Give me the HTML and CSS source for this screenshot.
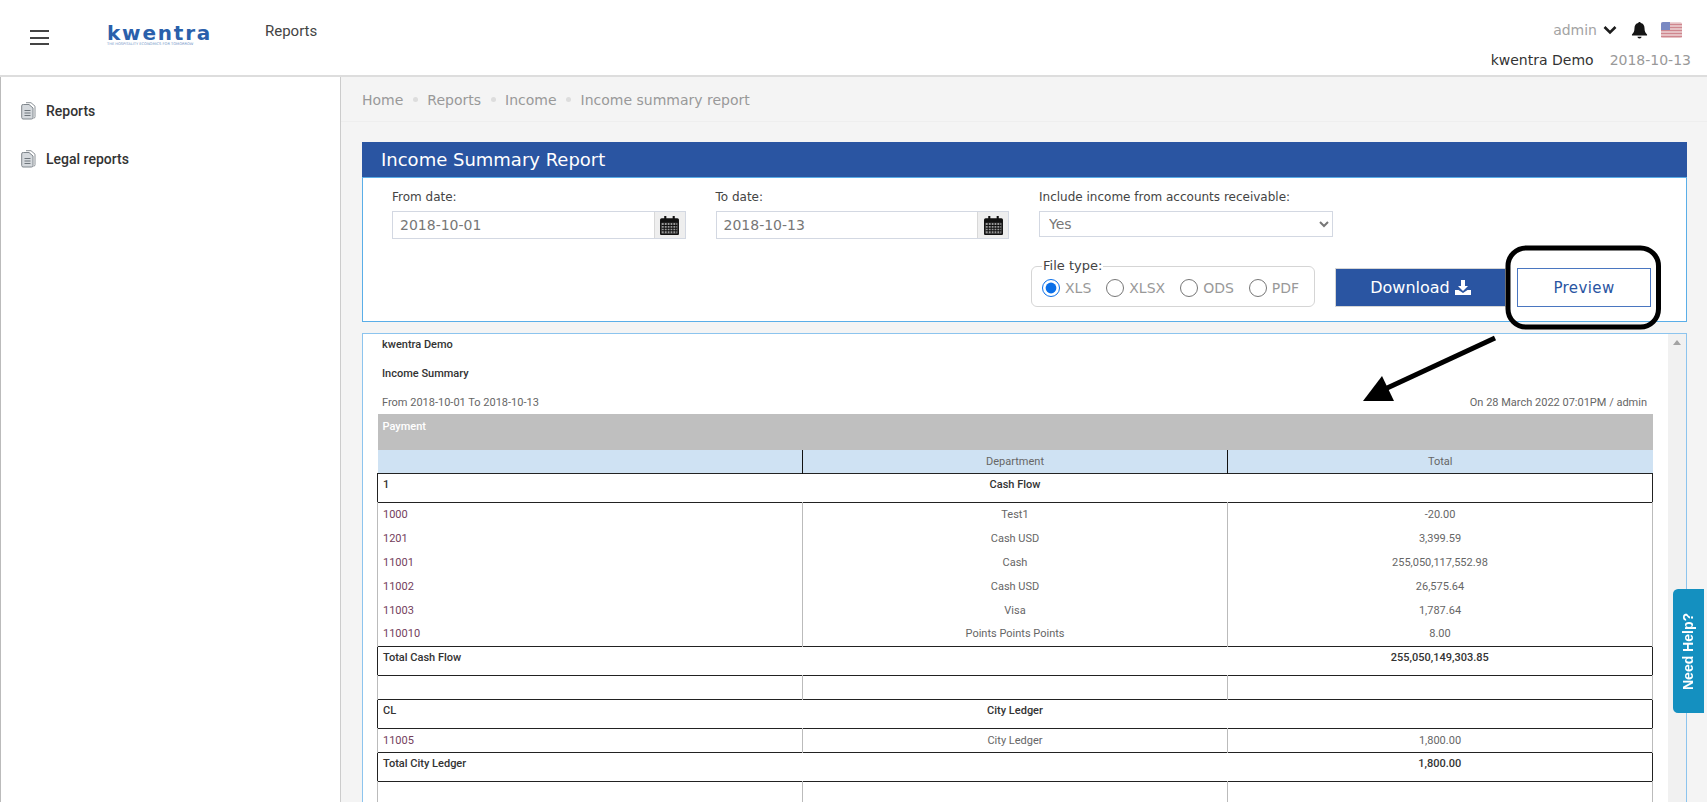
FILE: index.html
```html
<!DOCTYPE html>
<html lang="en">
<head>
    <meta charset="UTF-8">
    <meta name="viewport" content="width=device-width, initial-scale=1.0">
    <title>Income Summary Report - kwentra</title>
    <link rel="stylesheet" href="styles.css">
</head>
<body>

<header class="topbar">
    <div class="burger"><span></span><span></span><span></span></div>
    <div class="logo">
        <span class="logo-word">kwentra</span>
        <span class="logo-tag">THE HOSPITALITY ECONOMICS FOR TOMORROW</span>
    </div>
    <div class="topbar-title">Reports</div>
    <div class="topbar-right">
        <div class="user-row">
            <span class="user-name">admin</span>
            <svg class="chevron" viewBox="0 0 14 10" width="14" height="10"><path d="M1.5 2 7 7.5 12.5 2" fill="none" stroke="#1c1c1c" stroke-width="2.6"/></svg>
            <svg class="bell" viewBox="0 0 18 18" width="17" height="18"><path d="M9 0.5c.8 0 1.3.5 1.3 1.2 2.6.5 4 2.600 4 5.300 0 3.500 1 5.200 2.700 6.800v1H1v-1c1.700-1.600 2.700-3.300 2.700-6.800 0-2.700 1.400-4.800 4-5.300C7.700 1 8.200.5 9 .5z" fill="#151515"/><path d="M6.800 16.200h4.400a2.200 1.800 0 0 1-4.400 0z" fill="#151515"/></svg>
            <svg class="flag" viewBox="0 0 21 16" width="21" height="16">
                <rect width="21" height="16" rx="2" fill="#ecd3d5"/>
                <path d="M0 2.500h21M0 5.500h21M0 8.500h21M0 11.500h21M0 14.500h21" stroke="#cf868e" stroke-width="1.300"/>
                <path d="M2 0h7v8H0V2a2 2 0 0 1 2-2z" fill="#7a89c2"/>
            </svg>
        </div>
        <div class="hotel-row">
            <span class="hotel-name">kwentra Demo</span>
            <span class="hotel-date">2018-10-13</span>
        </div>
    </div>
</header>

<div class="page">
    <nav class="sidebar">
        <a class="side-item" href="#">
            <svg class="doc-icon" viewBox="0 0 15 18" width="15" height="18"><path d="M5 .7h5l4 3.500v10.500a1.500 1.500 0 0 1-1.500 1.500" fill="#fff" stroke="#8a9096" stroke-width="1"/><path d="M2.500 2.500h5.500l4 3.500v9.500a1.500 1.500 0 0 1-1.500 1.500h-8.500A1.500 1.500 0 0 1 .7 15.500V4a1.500 1.500 0 0 1 1.800-1.500z" fill="#d5d9dd" stroke="#7f868c" stroke-width="1"/><path d="M3.500 8.500h6M3.500 11h6M3.500 13.500h6" stroke="#6f767c" stroke-width="1"/></svg>
            <span>Reports</span>
        </a>
        <a class="side-item" href="#">
            <svg class="doc-icon" viewBox="0 0 15 18" width="15" height="18"><path d="M5 .7h5l4 3.500v10.500a1.500 1.500 0 0 1-1.500 1.500" fill="#fff" stroke="#8a9096" stroke-width="1"/><path d="M2.500 2.500h5.500l4 3.500v9.500a1.500 1.500 0 0 1-1.500 1.500h-8.500A1.500 1.500 0 0 1 .7 15.500V4a1.500 1.500 0 0 1 1.800-1.500z" fill="#d5d9dd" stroke="#7f868c" stroke-width="1"/><path d="M3.500 8.500h6M3.500 11h6M3.500 13.500h6" stroke="#6f767c" stroke-width="1"/></svg>
            <span>Legal reports</span>
        </a>
    </nav>

    <main class="content">
        <div class="breadcrumb">
            <span>Home</span><i></i><span>Reports</span><i></i><span>Income</span><i></i><span>Income summary report</span>
        </div>

        <section class="panel">
            <h1 class="panel-title">Income Summary Report</h1>
            <div class="panel-body">
                <div class="filter-row">
                    <div class="field">
                        <label for="from-date">From date:</label>
                        <div class="date-input">
                            <input type="text" id="from-date" value="2018-10-01">
                            <span class="date-btn">
                                <svg viewBox="0 0 18 19" width="19" height="20"><path d="M0 4.500a1.500 1.500 0 0 1 1.500-1.500H4V1h2v2h6V1h2v2h2.500A1.500 1.500 0 0 1 18 4.500V18a1 1 0 0 1-1 1H1a1 1 0 0 1-1-1z" fill="#111"/><path d="M1.500 7.500h15v10h-15z" fill="#999"/><path d="M1.500 10h15M1.500 12.500h15M1.500 15h15M4 7.500v10M6.800 7.500v10M9.500 7.500v10M12.200 7.500v10M15 7.500v10" stroke="#111" stroke-width="1"/></svg>
                            </span>
                        </div>
                    </div>
                    <div class="field">
                        <label for="to-date">To date:</label>
                        <div class="date-input">
                            <input type="text" id="to-date" value="2018-10-13">
                            <span class="date-btn">
                                <svg viewBox="0 0 18 19" width="19" height="20"><path d="M0 4.500a1.500 1.500 0 0 1 1.500-1.500H4V1h2v2h6V1h2v2h2.500A1.500 1.500 0 0 1 18 4.500V18a1 1 0 0 1-1 1H1a1 1 0 0 1-1-1z" fill="#111"/><path d="M1.500 7.500h15v10h-15z" fill="#999"/><path d="M1.500 10h15M1.500 12.500h15M1.500 15h15M4 7.500v10M6.800 7.500v10M9.500 7.500v10M12.200 7.500v10M15 7.500v10" stroke="#111" stroke-width="1"/></svg>
                            </span>
                        </div>
                    </div>
                    <div class="field">
                        <label for="receivable">Include income from accounts receivable:</label>
                        <select id="receivable" class="select-input">
                            <option>Yes</option>
                            <option>No</option>
                        </select>
                    </div>
                </div>

                <div class="action-row">
                    <fieldset class="file-type">
                        <legend>File type:</legend>
                        <label class="radio"><input type="radio" name="file-type" checked> XLS</label>
                        <label class="radio"><input type="radio" name="file-type"> XLSX</label>
                        <label class="radio"><input type="radio" name="file-type"> ODS</label>
                        <label class="radio"><input type="radio" name="file-type"> PDF</label>
                    </fieldset>
                    <button class="btn-download">Download
                        <svg viewBox="0 0 16 15" width="16" height="15"><path d="M6 0h4v6h3L8 11 3 6h3z" fill="#fff"/><path d="M0 10h3.500L8 13l4.500-3H16v5H0z" fill="#fff"/></svg>
                    </button>
                    <button class="btn-preview">Preview</button>
                </div>
            </div>
        </section>

        <section class="preview">
            <div class="report">
                <div class="report-line strong">kwentra Demo</div>
                <div class="report-line strong second">Income Summary</div>
                <div class="report-meta">
                    <span>From 2018-10-01 To 2018-10-13</span>
                    <span>On 28 March 2022 07:01PM / admin</span>
                </div>
                <table class="report-table">
                    <tr class="head-gray"><th>Payment</th><th></th><th></th></tr>
                    <tr class="head-blue"><td></td><td>Department</td><td>Total</td></tr>
                    <tr class="group"><td>1</td><td>Cash Flow</td><td></td></tr>
                    <tr class="line"><td><a>1000</a></td><td>Test1</td><td>-20.00</td></tr>
                    <tr class="line"><td><a>1201</a></td><td>Cash USD</td><td>3,399.59</td></tr>
                    <tr class="line"><td><a>11001</a></td><td>Cash</td><td>255,050,117,552.98</td></tr>
                    <tr class="line"><td><a>11002</a></td><td>Cash USD</td><td>26,575.64</td></tr>
                    <tr class="line"><td><a>11003</a></td><td>Visa</td><td>1,787.64</td></tr>
                    <tr class="line"><td><a>110010</a></td><td>Points Points Points</td><td>8.00</td></tr>
                    <tr class="group"><td>Total Cash Flow</td><td></td><td>255,050,149,303.85</td></tr>
                    <tr class="line"><td></td><td></td><td></td></tr>
                    <tr class="group"><td>CL</td><td>City Ledger</td><td></td></tr>
                    <tr class="line"><td><a>11005</a></td><td>City Ledger</td><td>1,800.00</td></tr>
                    <tr class="group"><td>Total City Ledger</td><td></td><td>1,800.00</td></tr>
                    <tr class="line"><td></td><td></td><td></td></tr>
                </table>
            </div>
            <div class="scrollbar"><span class="scroll-up"></span></div>
        </section>
    </main>
</div>

<a class="need-help" href="#">Need Help?</a>

<svg class="annotation" viewBox="0 0 1707 802" width="1707" height="802">
    <rect x="1508" y="248" width="150.500" height="79" rx="18" fill="none" stroke="#000" stroke-width="5"/>
    <path d="M1495 338 1385 389" stroke="#000" stroke-width="5"/>
    <path d="M1363 401 1382 376 1394 401z" fill="#000"/>
</svg>

</body>
</html>
```

FILE: styles.css
```css
* {
    box-sizing: border-box;
}

html, body {
    height: 100%;
}

body {
    margin: 0;
    overflow: hidden;
    background: #fff;
    font-family: 'DejaVu Sans', sans-serif;
    color: #333;
}

.topbar {
    display: flex;
    height: 77px;
    border-bottom: 2px solid #ddd;
    background: #fff;
}

.burger {
    display: flex;
    flex-direction: column;
    gap: 4.5px;
    margin: 30px 0 0 30px;
    width: 19px;
}

.burger span {
    height: 2px;
    background: #444;
}

.logo {
    display: flex;
    flex-direction: column;
    margin: 26px 0 0 58px;
    width: 105px;
}

.logo-word {
    font-weight: bold;
    font-size: 20px;
    line-height: 15px;
    letter-spacing: 1.8px;
    color: #2a60ab;
}

.logo-tag {
    margin-top: 1px;
    font-size: 3.6px;
    line-height: 4px;
    white-space: nowrap;
    color: #6f93c6;
}

.topbar-title {
    margin: 21px 0 0 53px;
    font-family: Roboto, sans-serif;
    font-size: 15px;
    line-height: 20px;
    color: #444;
}

.topbar-right {
    margin-left: auto;
    padding: 20px 16px 0 0;
    font-size: 14px;
}

.user-row {
    display: flex;
    justify-content: flex-end;
    align-items: center;
    height: 20px;
    padding-right: 9px;
}

.user-name {
    color: #a3a3a3;
}

.chevron {
    margin-left: 6px;
}

.bell {
    margin-left: 14px;
}

.flag {
    margin-left: 13px;
}

.hotel-row {
    display: flex;
    justify-content: flex-end;
    gap: 16px;
    margin-top: 10px;
    line-height: 20px;
}

.hotel-name {
    color: #333;
}

.hotel-date {
    color: #999;
}

.page {
    display: flex;
    height: calc(100vh - 77px);
}

.sidebar {
    flex: 0 0 341px;
    padding-top: 24px;
    border-left: 1px solid #bbb;
    border-right: 1px solid #ccc;
    background: #fff;
}

.side-item {
    display: flex;
    align-items: center;
    gap: 10px;
    height: 20px;
    margin: 0 0 28px 20px;
    font-family: Roboto, sans-serif;
    font-weight: 500;
    font-size: 14px;
    color: #333;
    text-decoration: none;
}

.content {
    flex: 1;
    overflow: hidden;
    background: #f4f4f4;
}

.breadcrumb {
    display: flex;
    align-items: center;
    height: 45px;
    padding: 1px 0 0 21px;
    border-bottom: 1px solid #eee;
    font-size: 14px;
    color: #999;
}

.breadcrumb i {
    width: 5px;
    height: 5px;
    margin: 0 9.5px;
    border-radius: 50%;
    background: #ddd;
}

.panel {
    margin: 20px 20px 0 21px;
    border: 1px solid #5aaee8;
    background: #fff;
}

.panel-title {
    margin: -1px -1px 0;
    padding-left: 19px;
    height: 36px;
    border-bottom: 1px solid #5aaee8;
    background: #2a55a2;
    color: #fff;
    font-weight: normal;
    font-size: 18px;
    line-height: 35px;
}

.panel-body {
    padding: 12px 35px 14px 29px;
}

.filter-row {
    display: flex;
    gap: 30px;
}

.field {
    width: 293.5px;
}

.field label {
    display: block;
    margin-bottom: 6px;
    font-size: 12px;
    line-height: 15px;
    color: #444;
}

.date-input {
    display: flex;
    height: 28px;
    border: 1px solid #d3d8e2;
}

.date-input input {
    flex: 1;
    min-width: 0;
    padding: 0 7px;
    border: 0;
    font-family: inherit;
    font-size: 14px;
    color: #777;
}

.date-btn {
    display: flex;
    justify-content: center;
    align-items: center;
    width: 31px;
    border-left: 1px solid #d8d8d8;
    background: #eee;
}

.select-input {
    width: 100%;
    height: 26px;
    padding: 0 5px;
    border: 1px solid #d3d8e2;
    background: #fff;
    font-family: inherit;
    font-size: 14px;
    color: #777;
}

.action-row {
    display: flex;
    justify-content: flex-end;
    align-items: flex-end;
    margin: 20px 0 0 -29px;
}

.file-type {
    display: flex;
    align-items: center;
    gap: 15px;
    width: 284px;
    height: 48px;
    margin: 0 20px 0 0;
    padding: 0 0 3px 10px;
    border: 1px solid #d5d5d5;
    border-radius: 6px;
}

.file-type legend {
    padding: 0 1px;
    margin-left: 0;
    font-size: 13px;
    line-height: 14px;
    color: #444;
}

.radio {
    display: flex;
    align-items: center;
    gap: 5px;
    font-size: 14px;
    color: #999;
}

.radio input {
    width: 18px;
    height: 18px;
    margin: 0;
    accent-color: #0a6fe8;
}

.btn-download {
    display: flex;
    justify-content: center;
    align-items: center;
    gap: 5px;
    width: 171px;
    height: 39px;
    margin-right: 11px;
    border: 1px solid #d5d5d5;
    background: #2a55a2;
    color: #fff;
    font-family: inherit;
    font-size: 16px;
}

.btn-preview {
    width: 134px;
    height: 39px;
    border: 1px solid #4a76c0;
    background: #fff;
    color: #2a55a2;
    font-family: inherit;
    font-size: 15px;
    letter-spacing: 0.4px;
}

.preview {
    display: flex;
    height: 600px;
    margin: 11px 20px 0 21px;
    border: 1px solid #8cc4ee;
    background: #fff;
}

.report {
    flex: 1;
    padding: 3px 15px 0 14px;
    font-family: Roboto, sans-serif;
    font-size: 11px;
    color: #666;
}

.report-line {
    padding-left: 5px;
    line-height: 16px;
}

.strong {
    font-weight: 500;
    color: #333;
}

.second {
    margin-top: 13px;
}

.report-meta {
    display: flex;
    justify-content: space-between;
    margin-top: 13px;
    padding: 0 6px 0 5px;
    line-height: 16px;
}

.report-table {
    width: 100%;
    margin-top: 3px;
    border-collapse: collapse;
    table-layout: fixed;
}

.report-table td, .report-table th {
    padding: 0 5px;
    text-align: center;
}

.report-table td:first-child, .report-table th:first-child {
    text-align: left;
}

.head-gray th {
    height: 36px;
    padding-bottom: 10px;
    background: #bfbfbf;
    color: #fff;
    font-weight: 500;
    vertical-align: top;
    line-height: 26px;
}

.head-blue td {
    height: 23px;
    background: #cfe2f3;
    border-left: 1px solid #111;
    border-right: 1px solid #111;
}

.head-blue td:first-child {
    border-left: 0;
}

.head-blue td:last-child {
    border-right: 0;
}

.group {
    border: 1px solid #222;
}

.group td {
    height: 29px;
    padding-bottom: 6px;
    font-weight: 500;
    color: #333;
}

.line td {
    height: 24px;
    border-left: 1px solid #bbb;
    border-right: 1px solid #bbb;
}

.line a {
    color: #74405c;
}

.scrollbar {
    flex: 0 0 18px;
    background: #f1f1f1;
}

.scroll-up {
    display: block;
    width: 0;
    margin: 6px auto 0;
    border: 4px solid transparent;
    border-top: 0;
    border-bottom: 5px solid #a3a3a3;
}

.need-help {
    position: fixed;
    top: 589px;
    right: 3px;
    display: flex;
    justify-content: center;
    align-items: center;
    width: 31px;
    height: 124px;
    border-radius: 0 5px 5px 0;
    background: #1490c0;
    color: #fff;
    font-family: 'Liberation Sans', sans-serif;
    font-weight: bold;
    font-size: 14px;
    text-decoration: none;
    writing-mode: vertical-rl;
    transform: rotate(180deg);
}

.annotation {
    position: absolute;
    top: 0;
    left: 0;
    pointer-events: none;
}
```
